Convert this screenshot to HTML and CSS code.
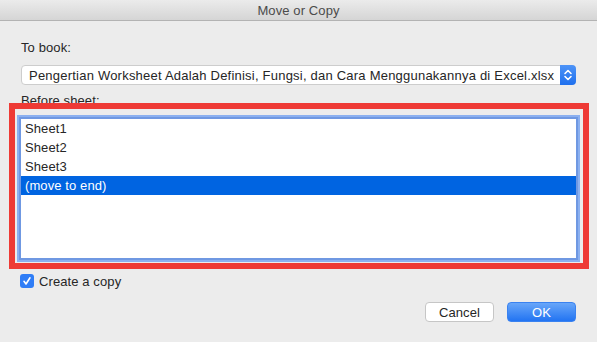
FILE: index.html
```html
<!DOCTYPE html>
<html lang="en">
<head>
    <meta charset="UTF-8">
    <meta name="viewport" content="width=device-width, initial-scale=1.0">
    <title>Move or Copy</title>
    <link rel="stylesheet" href="styles.css">
</head>
<body>
    <div class="dialog">
        <div class="titlebar">Move or Copy</div>
        <div class="content">
            <div class="label label-book">To book:</div>
            <div class="select">
                <span class="select-text">Pengertian Worksheet Adalah Definisi, Fungsi, dan Cara Menggunakannya di Excel.xlsx</span>
                <span class="stepper">
                    <svg width="16" height="20" viewBox="0 0 16 20">
                        <path d="M5 8.5 L8 5.5 L11 8.5" fill="none" stroke="#fff" stroke-width="1.6" stroke-linecap="round" stroke-linejoin="round"/>
                        <path d="M5 11.5 L8 14.5 L11 11.5" fill="none" stroke="#fff" stroke-width="1.6" stroke-linecap="round" stroke-linejoin="round"/>
                    </svg>
                </span>
            </div>
            <div class="label label-sheet">Before sheet:</div>
            <ul class="sheets">
                <li>Sheet1</li>
                <li>Sheet2</li>
                <li>Sheet3</li>
                <li class="selected">(move to end)</li>
            </ul>
            <label class="copy">
                <span class="checkbox">
                    <svg width="14" height="14" viewBox="0 0 14 14">
                        <path d="M4 7.3 L6 10 L10 3.8" fill="none" stroke="#fff" stroke-width="1.6" stroke-linecap="round" stroke-linejoin="round"/>
                    </svg>
                </span>
                Create a copy
            </label>
            <div class="buttons">
                <button class="btn">Cancel</button>
                <button class="btn btn-ok">OK</button>
            </div>
        </div>
        <div class="highlight"></div>
    </div>
</body>
</html>
```

FILE: styles.css
```css
body {
    margin: 0;
    background: #ececec;
    font-family: "Liberation Sans", Arial, sans-serif;
    font-size: 13px;
    letter-spacing: 0.1px;
    color: #262626;
}
.dialog {
    position: relative;
    width: 597px;
    height: 342px;
    background: #ececec;
    overflow: hidden;
}
.titlebar {
    height: 20px;
    line-height: 21px;
    text-align: center;
    color: #4b4b4b;
    background: linear-gradient(#ebebeb, #d5d5d5);
    border-bottom: 1px solid #b3b3b3;
}
.content {
    padding: 0 21px;
    display: flex;
    flex-direction: column;
}
.label {
    line-height: 16px;
}
.label-book {
    margin-top: 19px;
}
.label-sheet {
    margin-top: 8px;
}
.select {
    margin-top: 9px;
    height: 20px;
    box-sizing: border-box;
    display: flex;
    align-items: center;
    background: #fff;
    border: 1px solid #cdcdcd;
    border-radius: 4px;
    padding-left: 7px;
}
.select-text {
    flex: 1;
    white-space: nowrap;
    overflow: hidden;
    letter-spacing: 0.22px;
}
.stepper {
    width: 16px;
    height: 20px;
    margin: -1px -1px -1px 0;
    border-radius: 0 4px 4px 0;
    background: linear-gradient(#4d93f7, #1f70ee);
    display: flex;
}
.sheets {
    list-style: none;
    margin: 8px -2px 0 -2px;
    padding: 0;
    height: 143px;
    box-sizing: border-box;
    background: #fff;
    border: 2px solid #6f98e2;
    box-shadow: 0 0 0 2px #8bb0f0;
}
.sheets li {
    height: 19px;
    line-height: 19px;
    padding-left: 4px;
}
.sheets li.selected {
    background: #0064e1;
    color: #fff;
}
.copy {
    margin-top: 13px;
    height: 16px;
    display: flex;
    align-items: center;
    gap: 5px;
    margin-left: -1px;
}
.checkbox {
    width: 14px;
    height: 14px;
    border-radius: 3px;
    background: #2f7df6;
    display: flex;
}
.buttons {
    margin-top: 13px;
    display: flex;
    justify-content: flex-end;
    gap: 13px;
}
.btn {
    width: 69px;
    height: 20px;
    padding: 0;
    font-family: inherit;
    font-size: 13px;
    letter-spacing: 0.1px;
    color: #262626;
    background: #fff;
    border: 1px solid #c6c6c6;
    border-radius: 4px;
}
.btn-ok {
    color: #fff;
    background: linear-gradient(#68a6f9, #2274f2);
    border-color: #3a82f0;
}
.highlight {
    position: absolute;
    left: 9px;
    top: 103px;
    width: 580px;
    height: 166px;
    box-sizing: border-box;
    border: 6px solid #ee3a35;
}
```
